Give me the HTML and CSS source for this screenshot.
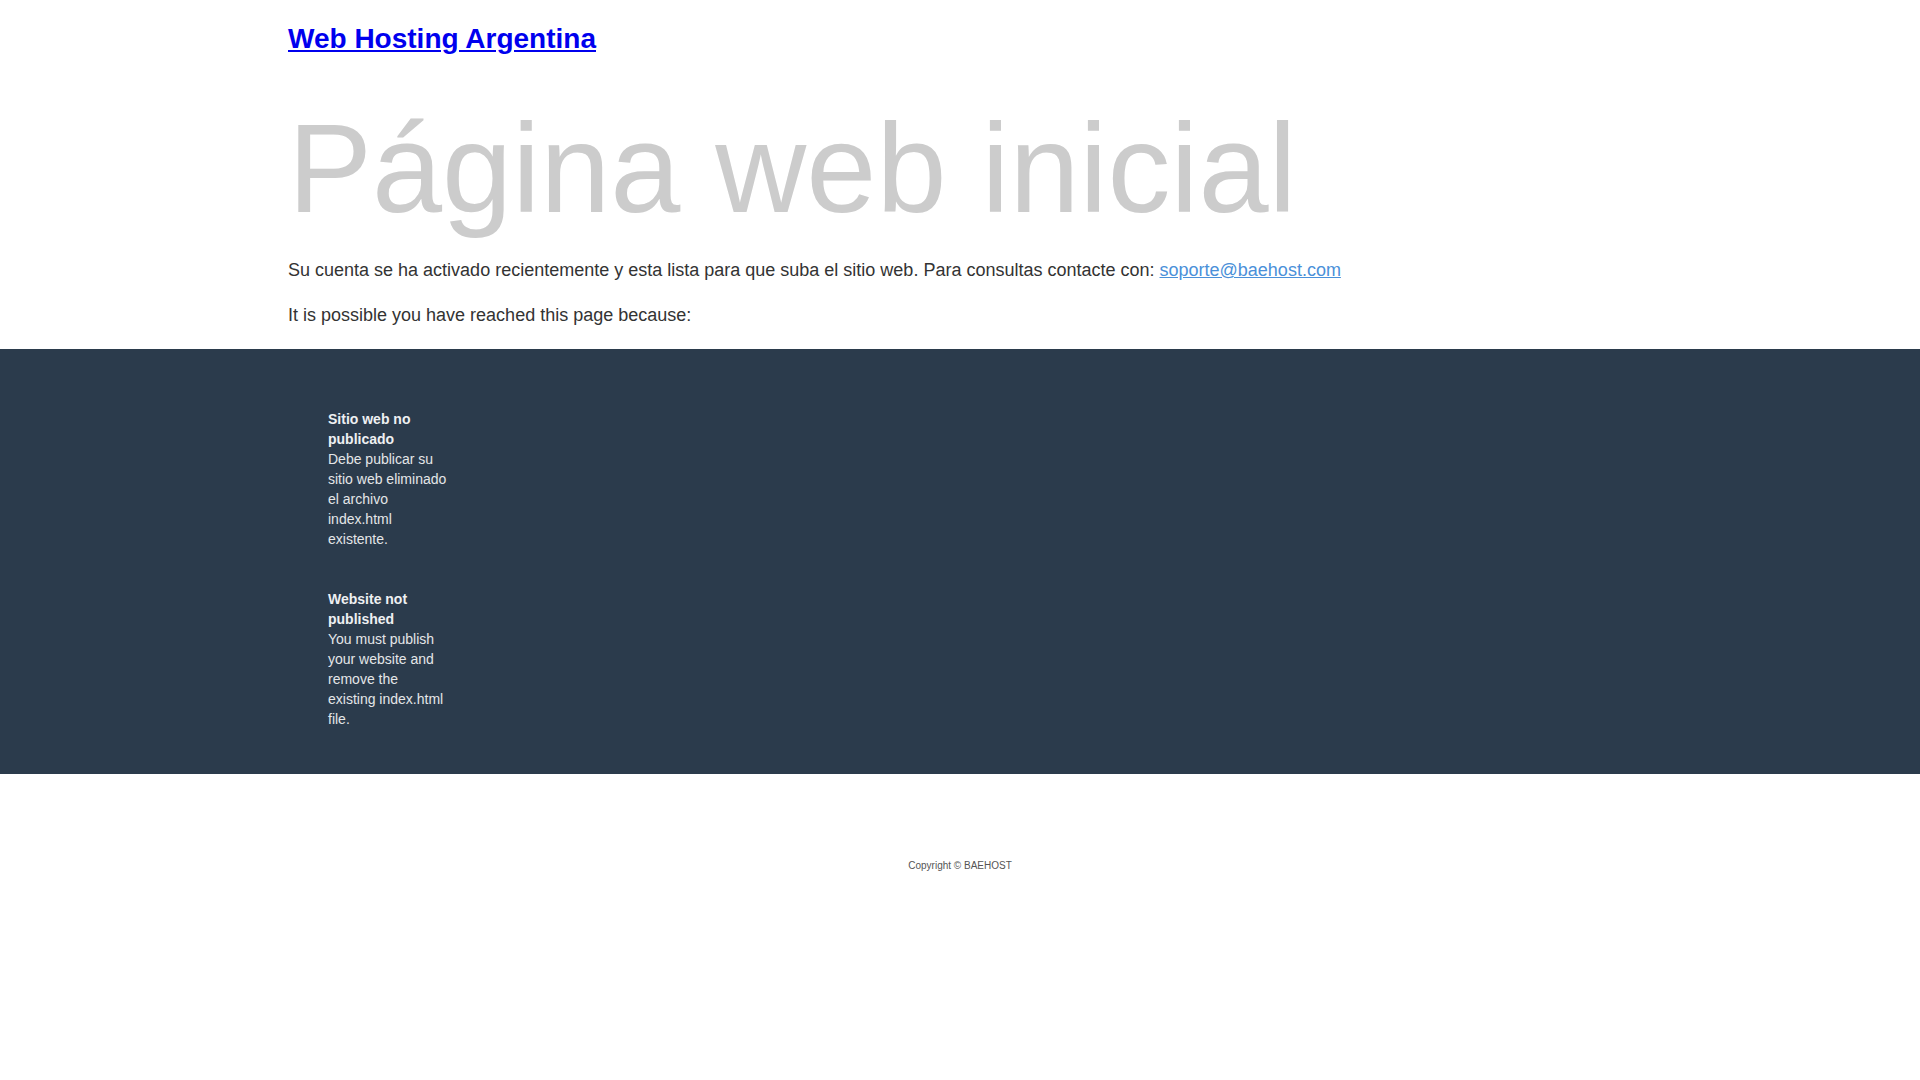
FILE: index.html
```html
<!DOCTYPE html>
<html lang="es">
<head>
<meta charset="utf-8">
<title>Web Hosting Argentina</title>
<link rel="stylesheet" href="styles.css">
</head>
<body>
<div class="container">
  <h2 class="site-title"><a href="#">Web Hosting Argentina</a></h2>
  <h1 class="hero">Página web inicial</h1>
  <p class="lead">Su cuenta se ha activado recientemente y esta lista para que suba el sitio web. Para consultas contacte con: <a class="mail" href="#">soporte@baehost.com</a></p>
  <p class="lead lead-last">It is possible you have reached this page because:</p>
</div>
<section class="band">
  <div class="container band-inner">
    <div class="reason">
      <strong>Sitio web no publicado</strong><br>
      Debe publicar su sitio web eliminado el archivo index.html existente.
    </div>
    <div class="reason">
      <strong>Website not published</strong><br>
      You must publish your website and remove the existing index.html file.
    </div>
  </div>
</section>
<footer class="footer">Copyright © BAEHOST</footer>
</body>
</html>
```
FILE: styles.css
```css
html, body {
  margin: 0;
  padding: 0;
  background: #fff;
}
body {
  font-family: "Liberation Sans", Arial, sans-serif;
  color: #333;
}
.container {
  width: 1344px;
  margin: 0 auto;
}
.site-title {
  margin: 0;
  padding-top: 23px;
  font-size: 28px;
  line-height: 32px;
  font-weight: bold;
}
.site-title a {
  color: #0000ee;
  text-decoration: underline;
}
.hero {
  margin: 45px 0 0;
  font-size: 126px;
  line-height: 138px;
  font-weight: normal;
  color: #ccc;
}
.lead {
  margin: 18px 0 0;
  font-size: 18px;
  line-height: 28px;
}
.lead-last {
  margin: 17px 0 20px;
}
.mail {
  color: #4a90d9;
  text-decoration: underline;
}
.band {
  background: #2b3b4c;
  padding: 60px 0 45px;
}
.band-inner {
  display: flex;
  flex-direction: column;
  gap: 40px;
}
.reason {
  margin-left: 40px;
  width: 120px;
  font-size: 14px;
  line-height: 20px;
  color: #e4e6e8;
}
.reason strong {
  color: #eef0f2;
}
.footer {
  padding-top: 86px;
  text-align: center;
  font-size: 10px;
  line-height: 12px;
  color: #555;
}
```
